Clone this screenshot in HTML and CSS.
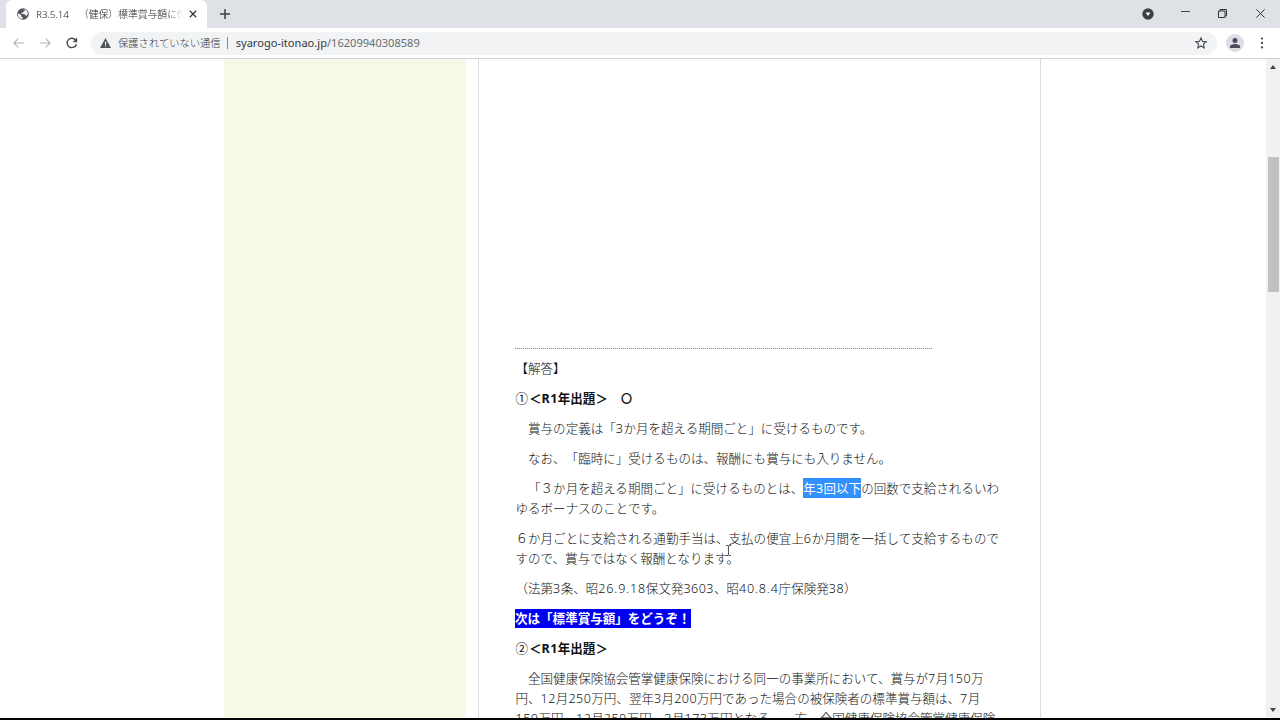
FILE: index.html
```html
<!DOCTYPE html>
<html lang="ja">
<head>
    <meta charset="UTF-8">
    <meta name="viewport" content="width=device-width, initial-scale=1.0">
    <title>R3.5.14 （健保）標準賞与額に係る</title>
    <link rel="stylesheet" href="styles.css">
</head>
<body>
    <div class="window">
        <div class="tabstrip">
            <div class="tab">
                <svg class="favicon" viewBox="0 0 12 12"><circle cx="6" cy="6" r="5.8" fill="#50545a"/><path d="M1 5.2 4.2 7v1.4l1.6 1v1.3C3 11 1 9 1 6.5zM5 1.2h2.6L8 2.5 6.3 3.6v1.2H4.4v1.3h3l1 1.5h1.3l1-1.2V4.8l-1-2.2L7.6 1z" fill="#f4f5f6"/></svg>
                <span class="tab-title">R3.5.14　（健保）標準賞与額に係</span>
                <svg class="tab-close" viewBox="0 0 8 8"><path d="M.8.8l6.4 6.4M7.2.8.8 7.2" stroke="#35383c" stroke-width="1.3"/></svg>
            </div>
            <svg class="new-tab" viewBox="0 0 10 10"><path d="M5 0v10M0 5h10" stroke="#3c4043" stroke-width="1.5"/></svg>
            <div class="window-buttons">
                <svg width="12" height="12" viewBox="0 0 12 12"><circle cx="6" cy="6" r="5.7" fill="#3c4043"/><path d="M3.6 4.5h4.8L6 8z" fill="#fff"/></svg>
                <svg class="minimize" width="9" height="9" viewBox="0 0 9 9"><path d="M0 2.5h9" stroke="#444" stroke-width="1"/></svg>
                <svg class="restore" width="9" height="9" viewBox="0 0 9 9"><path d="M.5 2h6.5v6.5H.5zM2 2V.5h6.5V7H7" fill="none" stroke="#333" stroke-width="1"/></svg>
                <svg width="9" height="9" viewBox="0 0 9 9"><path d="M.4.4l8.2 8.2M8.6.4.4 8.6" stroke="#333" stroke-width="1"/></svg>
            </div>
        </div>
        <div class="toolbar">
            <svg class="nav" width="11" height="10" viewBox="0 0 11 10"><path d="M11 5H1M5.3.6.9 5l4.4 4.4" fill="none" stroke="#b4b6b9" stroke-width="1.2"/></svg>
            <svg class="nav" width="11" height="10" viewBox="0 0 11 10"><path d="M0 5h10M5.7.6 10.1 5 5.7 9.4" fill="none" stroke="#b4b6b9" stroke-width="1.2"/></svg>
            <svg class="nav" width="12" height="12" viewBox="0 0 12 12"><path d="M9.6 3A4.7 4.7 0 1 0 10.4 7.2" fill="none" stroke="#46494d" stroke-width="1.4"/><path d="M11.2.6v4.6H6.6z" fill="#46494d"/></svg>
            <div class="address">
                <svg width="11" height="10" viewBox="0 0 11 10"><path d="M5.5 0 11 10H0z" fill="#505357"/><path d="M5 3.5h1.1V7H5zM5 7.8h1.1v1H5z" fill="#fff"/></svg>
                <span class="security">保護されていない通信</span>
                <span class="divider"></span>
                <span class="url">syarogo-itonao.jp<span class="path">/16209940308589</span></span>
                <svg class="star" width="12" height="12" viewBox="0 0 12 12"><path d="M6 .9 7.5 4.4l3.7.3-2.8 2.5.8 3.7L6 9l-3.2 1.9.8-3.7L.8 4.7l3.7-.3z" fill="none" stroke="#46494d" stroke-width="1.1"/></svg>
            </div>
            <svg class="avatar" width="18" height="18" viewBox="0 0 18 18"><circle cx="9" cy="9" r="9" fill="#dddee5"/><circle cx="9" cy="6.6" r="2.5" fill="#4b4b60"/><path d="M3.9 13.9v-1.2c0-1.8 3.2-2.7 5.1-2.7s5.1.9 5.1 2.7v1.2z" fill="#4b4b60"/></svg>
            <svg class="menu" width="4" height="12" viewBox="0 0 4 12"><g fill="#46494d"><circle cx="2" cy="1.6" r="1.15"/><circle cx="2" cy="6" r="1.15"/><circle cx="2" cy="10.4" r="1.15"/></g></svg>
        </div>
        <div class="viewport">
            <div class="page">
                <div class="sidebar"></div>
                <div class="article">
                    <div class="rule"></div>
                    <p>【解答】</p>
                    <p><span class="num">①</span><b>＜<span class="nb">R1</span>年出題＞　<span class="maru">〇</span></b></p>
                    <p>　賞与の定義は「<span class="n">3</span>か月を超える期間ごと」に受けるものです。</p>
                    <p>　なお、「臨時に」受けるものは、報酬にも賞与にも入りません。</p>
                    <p>　「３か月を超える期間ごと」に受けるものとは、<span class="selected">年<span class="n">3</span>回以下</span>の回数で支給されるいわ<br>ゆるボーナスのことです。</p>
                    <p>６か月ごとに支給される通勤手当は、支払の便宜上<span class="n">6</span>か月間を一括して支給するもので<br>すので、賞与ではなく報酬となります。</p>
                    <p>（法第<span class="n">3</span>条、昭<span class="n date">26.9.18</span>保文発<span class="n">3603</span>、昭<span class="n date">40.8.4</span>庁保険発<span class="n">38</span>）</p>
                    <p><b class="next">次は「標準賞与額」をどうぞ！</b></p>
                    <p><span class="num">②</span><b>＜<span class="nb">R1</span>年出題＞</b></p>
                    <p>　全国健康保険協会管掌健康保険における同一の事業所において、賞与が<span class="n">7</span>月<span class="n">150</span>万<br>円、<span class="n">12</span>月<span class="n">250</span>万円、翌年<span class="n">3</span>月<span class="n">200</span>万円であった場合の被保険者の標準賞与額は、<span class="n">7</span>月<br><span class="n">150</span>万円、<span class="n">12</span>月<span class="n">250</span>万円、<span class="n">3</span>月<span class="n">173</span>万円となる。一方、全国健康保険協会管掌健康保険</p>
                </div>
            </div>
            <div class="scrollbar">
                <svg width="6" height="4" viewBox="0 0 6 4"><path d="M0 4 3 0l3 4z" fill="#444"/></svg>
                <div class="thumb"></div>
                <svg class="down" width="6" height="4" viewBox="0 0 6 4"><path d="M0 0h6L3 4z" fill="#444"/></svg>
            </div>
        </div>
        <svg class="cursor" width="5" height="11" viewBox="0 0 5 11"><path d="M0 .5h2l.5.5.5-.5h2M2.5 1v9M0 10.5h2l.5-.5.5.5h2" fill="none" stroke="#444" stroke-width=".9"/></svg>
    </div>
</body>
</html>
```
FILE: styles.css
```css
* {
    box-sizing: border-box;
}
body {
    margin: 0;
    background: #000;
    font-family: "Noto Sans", "Noto Sans CJK JP", sans-serif;
    text-spacing-trim: space-all;
    overflow: hidden;
}
svg {
    display: block;
    flex: none;
}
.window {
    display: flex;
    flex-direction: column;
    width: 1280px;
    height: 718px;
    background: #fff;
    overflow: hidden;
}
.tabstrip {
    display: flex;
    align-items: center;
    flex: none;
    height: 28px;
    padding-left: 6px;
    background: #dee1e6;
}
.tab {
    display: flex;
    align-items: center;
    width: 201px;
    height: 28px;
    padding: 0 9px 0 11px;
    background: #fff;
    border-radius: 6px 6px 0 0;
}
.favicon {
    width: 12px;
    height: 12px;
}
.tab-title {
    flex: none;
    width: 147px;
    margin-left: 7px;
    font-size: 9.9px;
    font-weight: 300;
    line-height: 14px;
    letter-spacing: -0.05px;
    color: #202326;
    white-space: nowrap;
    overflow: hidden;
    -webkit-mask-image: linear-gradient(to right, #000 90%, transparent 100%);
    mask-image: linear-gradient(to right, #000 90%, transparent 100%);
}
.tab-close {
    width: 8px;
    height: 8px;
    margin-left: 6px;
}
.new-tab {
    width: 10px;
    height: 10px;
    margin-left: 13px;
}
.window-buttons {
    display: flex;
    align-items: center;
    gap: 28px;
    margin-left: auto;
    padding-right: 15px;
    padding-bottom: 1px;
}
.minimize {
    margin-left: -1px;
}
.restore {
    margin-right: 1px;
}
.toolbar {
    display: flex;
    align-items: center;
    flex: none;
    height: 31px;
    padding-left: 13px;
    background: #fff;
    border-bottom: 1px solid #cfd1d3;
}
.nav {
    margin-right: 16px;
}
.nav + .nav + .nav {
    margin-left: -1px;
    margin-right: 13px;
}
.address {
    display: flex;
    align-items: center;
    width: 1126px;
    height: 23px;
    padding: 0 10px 0 9px;
    background: #f1f3f4;
    border-radius: 12px;
    font-size: 11.08px;
    line-height: 16px;
    color: #35383c;
}
.security {
    margin-left: 7px;
    font-family: "Noto Sans CJK JP", sans-serif;
    font-size: 10.3px;
    font-weight: 300;
}
.divider {
    width: 1px;
    height: 12px;
    margin: 0 8px 0 6px;
    background: #85888c;
}
.path {
    color: #6a6d71;
}
.star {
    margin-left: auto;
}
.avatar {
    margin-left: 9px;
}
.menu {
    margin-left: 16px;
}
.viewport {
    display: flex;
    flex: 1;
    min-height: 0;
}
.page {
    display: flex;
    width: 1266px;
    padding-left: 224px;
    overflow: hidden;
}
.sidebar {
    width: 242px;
    margin-right: 12px;
    background: #f5fae6;
}
.article {
    width: 563px;
    height: 700px;
    padding: 289px 0 0 36px;
    border-left: 1px solid #dcdcdc;
    border-right: 1px solid #dcdcdc;
    font-family: "Noto Sans CJK JP", sans-serif;
    font-size: 12.54px;
    font-weight: 300;
    line-height: 20px;
    color: #111;
    white-space: nowrap;
}
.rule {
    width: 417px;
    height: 1px;
    background: #efdfec;
    border-top: 1px dotted #b070a0;
}
.article p {
    margin: 9px 0 10px;
    padding-left: 0.5px;
}
.article p + p {
    margin-top: 10px;
}
.article b {
    font-weight: 700;
}
.num {
    font-weight: 400;
    margin-right: 1px;
}
.maru {
    font-size: 11px;
    line-height: 1;
    margin-left: 0.5px;
}
.n,
.nb {
    font-family: "Noto Sans", sans-serif;
    line-height: 1;
}
.n {
    letter-spacing: 0.47px;
}
.date {
    letter-spacing: 0.8px;
}
.nb {
    letter-spacing: 0.4px;
}
.selected {
    display: inline-block;
    height: 20px;
    background: #3390ff;
    color: #fff;
    font-weight: 400;
    vertical-align: top;
}
.article .next {
    display: block;
    width: 176px;
    height: 19px;
    margin: 11px 0 10px -0.5px;
    line-height: 17px;
    background: #0000f0;
    color: #fff;
}
.scrollbar {
    display: flex;
    flex-direction: column;
    align-items: center;
    width: 14px;
    padding: 6px 0;
    background: #f1f1f1;
}
.thumb {
    width: 11px;
    height: 135px;
    margin-top: 88px;
    background: #c1c1c1;
}
.down {
    margin-top: auto;
}
/* text caret pointer floating over the article */
.cursor {
    position: absolute;
    left: 726px;
    top: 545px;
}
```
